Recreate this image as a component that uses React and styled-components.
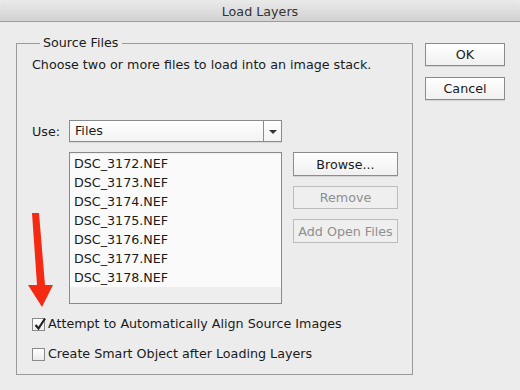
import styled, { createGlobalStyle } from 'styled-components';

const Global = createGlobalStyle`
  html, body { margin: 0; padding: 0; background: #ececec; }
  * { box-sizing: border-box; }
  body { font-family: "DejaVu Sans", "Liberation Sans", sans-serif; font-size: 12.7px; color: #1a1a1a; }
`;

const Window = styled.div`
  position: relative;
  width: 520px;
  height: 390px;
  background: #ececec;
  display: flex;
  flex-direction: column;
  overflow: hidden;
`;

const TitleBar = styled.div`
  height: 22px;
  flex: none;
  display: flex;
  align-items: center;
  justify-content: center;
  background: linear-gradient(#eaeaea, #d2d2d2);
  border-bottom: 1px solid #9c9c9c;
  border-radius: 5px 5px 0 0;
  color: #333;
  padding-top: 1px;
`;

const Body = styled.div`
  display: flex;
  padding: 14px 15px 0 16px;
  gap: 12px;
`;

const Group = styled.fieldset`
  margin: 0;
  width: 398px;
  height: 339px;
  border: 1px solid #9a9a9a;
  padding: 0 0 0 15px;
`;

const Legend = styled.legend`
  padding: 0 4px 0 3px;
  margin-left: 8px;
  line-height: 14px;
`;

const Intro = styled.div`
  margin-top: 7px;
  line-height: 16px;
`;

const Grid = styled.div`
  display: grid;
  grid-template-columns: 37px 213px 11px 105px;
  margin-top: 47px;
`;

const Label = styled.div`
  line-height: 21px;
  padding-top: 1px;
`;

const Select = styled.div`
  display: flex;
  height: 22px;
  border: 1px solid #8a8a8a;
  background: linear-gradient(#ffffff, #f2f2f2);
  box-shadow: 0 1px 0 rgba(0,0,0,0.08);
`;

const SelectValue = styled.div`
  flex: 1;
  padding: 2px 0 0 5px;
  line-height: 16px;
`;

const SelectArrow = styled.div`
  width: 18px;
  border-left: 1px solid #8a8a8a;
  display: flex;
  align-items: center;
  justify-content: center;
  &::after {
    content: '';
    border-left: 4px solid transparent;
    border-right: 4px solid transparent;
    border-top: 4px solid #333;
    margin-top: 1px;
  }
`;

const List = styled.div`
  grid-column: 2;
  margin-top: 10px;
  height: 152px;
  border: 1px solid #8a8a8a;
  background: #eeeeee;
  padding-top: 1px;
`;

const Item = styled.div`
  height: 19px;
  line-height: 19px;
  padding-left: 4px;
  background: #fafafa;
`;

const SideButtons = styled.div`
  grid-column: 4;
  margin-top: 10px;
  display: flex;
  flex-direction: column;
  gap: 10px;
`;

const Button = styled.div`
  height: ${p => p.$h || 24}px;
  width: ${p => p.$w || 105}px;
  display: flex;
  align-items: center;
  justify-content: center;
  border: 1px solid ${p => (p.$disabled ? '#bdbdbd' : '#8c8c8c')};
  background: ${p => (p.$disabled ? '#efefef' : 'linear-gradient(#ffffff, #f0f0f0)')};
  color: ${p => (p.$disabled ? '#8e8e8e' : '#1a1a1a')};
  box-shadow: ${p => (p.$disabled ? 'none' : '0 1px 0 rgba(0,0,0,0.1)')};
`;

const Checks = styled.div`
  margin-top: 13px;
  display: flex;
  flex-direction: column;
  gap: 16px;
`;

const CheckRow = styled.label`
  display: flex;
  align-items: center;
  gap: 3px;
  line-height: 14px;
`;

const Box = styled.span`
  position: relative;
  width: 13px;
  height: 13px;
  border: 1px solid #8a8a8a;
  background: linear-gradient(#ffffff, #ececec);
`;

const Tick = styled.svg`
  position: absolute;
  left: 0;
  top: -2px;
`;

const RightColumn = styled.div`
  display: flex;
  flex-direction: column;
  gap: 11px;
  padding-top: 7px;
`;

const Annotation = styled.svg`
  position: absolute;
  left: 26px;
  top: 210px;
`;

function Check({ checked, children }) {
  return (
    <CheckRow>
      <Box>
        {checked && (
          <Tick width="14" height="14" viewBox="0 0 14 14">
            <path d="M2.5 8 L5.5 11.5 L12 1.5" fill="none" stroke="#222" strokeWidth="2.2" />
          </Tick>
        )}
      </Box>
      {children}
    </CheckRow>
  );
}

const files = ['DSC_3172.NEF', 'DSC_3173.NEF', 'DSC_3174.NEF', 'DSC_3175.NEF', 'DSC_3176.NEF', 'DSC_3177.NEF', 'DSC_3178.NEF'];

export default function App() {
  return (
    <Window>
      <Global />
      <TitleBar>Load Layers</TitleBar>
      <Body>
        <Group>
          <Legend>Source Files</Legend>
          <Intro>Choose two or more files to load into an image stack.</Intro>
          <Grid>
            <Label>Use:</Label>
            <Select>
              <SelectValue>Files</SelectValue>
              <SelectArrow />
            </Select>
            <List>
              {files.map(f => <Item key={f}>{f}</Item>)}
            </List>
            <SideButtons>
              <Button>Browse...</Button>
              <Button $disabled $h={23}>Remove</Button>
              <Button $disabled $h={24}>Add Open Files</Button>
            </SideButtons>
          </Grid>
          <Checks>
            <Check checked>Attempt to Automatically Align Source Images</Check>
            <Check>Create Smart Object after Loading Layers</Check>
          </Checks>
        </Group>
        <RightColumn>
          <Button $w={80} $h={23}>OK</Button>
          <Button $w={80} $h={23}>Cancel</Button>
        </RightColumn>
      </Body>
      <Annotation width="30" height="100" viewBox="0 0 30 100">
        <path d="M6 3 L13 3 L19 75 L27 75 L16 97 L2 75 L11 75 Z" fill="#f42a12" />
      </Annotation>
    </Window>
  );
}
